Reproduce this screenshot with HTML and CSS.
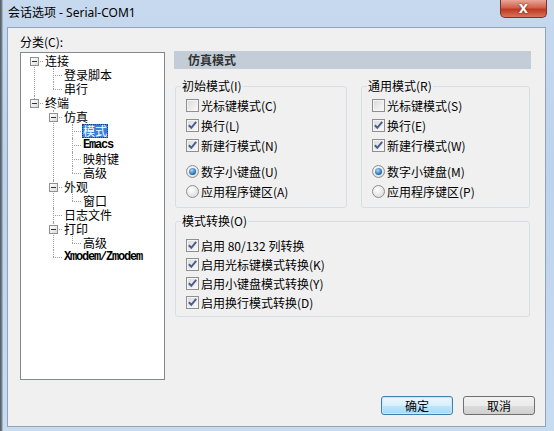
FILE: index.html
```html
<!DOCTYPE html>
<html lang="zh-CN">
<head>
  <meta charset="UTF-8" />
  <title>会话选项 - Serial-COM1</title>
  <link rel="stylesheet" href="styles.css">
</head>
<body>

  <div class="window">
    <div class="titlebar">
      <span class="title">会话选项 - Serial-COM1</span>
      <button class="close-btn">X</button>
    </div>

    <div class="client">
      <div class="main">

        <!-- category tree -->
        <div class="side">
          <div class="side-label">分类(C):</div>
          <div class="tree">
            <ul class="root">
              <li><span class="toggle"></span><span class="label">连接</span>
                <ul>
                  <li><span class="label">登录脚本</span></li>
                  <li><span class="label">串行</span></li>
                </ul>
              </li>
              <li><span class="toggle"></span><span class="label">终端</span>
                <ul>
                  <li><span class="toggle"></span><span class="label">仿真</span>
                    <ul>
                      <li><span class="label selected">模式</span></li>
                      <li><span class="label mono">Emacs</span></li>
                      <li><span class="label">映射键</span></li>
                      <li><span class="label">高级</span></li>
                    </ul>
                  </li>
                  <li><span class="toggle"></span><span class="label">外观</span>
                    <ul>
                      <li><span class="label">窗口</span></li>
                    </ul>
                  </li>
                  <li><span class="label">日志文件</span></li>
                  <li><span class="toggle"></span><span class="label">打印</span>
                    <ul>
                      <li><span class="label">高级</span></li>
                    </ul>
                  </li>
                  <li><span class="label mono">Xmodem/Zmodem</span></li>
                </ul>
              </li>
            </ul>
          </div>
        </div>

        <!-- settings panel -->
        <div class="panel">
          <div class="panel-header">仿真模式</div>

          <div class="group-row">
            <fieldset class="group group-init">
              <legend>初始模式(I)</legend>
              <div class="opts">
                <div class="opt"><span class="cb"></span>光标键模式(C)</div>
                <div class="opt"><span class="cb"><svg viewBox="0 0 11 11"><path d="M1.8 5.2 L4.3 7.8 L9.2 1.8"/></svg></span>换行(L)</div>
                <div class="opt"><span class="cb"><svg viewBox="0 0 11 11"><path d="M1.8 5.2 L4.3 7.8 L9.2 1.8"/></svg></span>新建行模式(N)</div>
                <div class="radios">
                  <div class="opt"><span class="rb on"></span>数字小键盘(U)</div>
                  <div class="opt"><span class="rb"></span>应用程序键区(A)</div>
                </div>
              </div>
            </fieldset>

            <fieldset class="group group-common">
              <legend>通用模式(R)</legend>
              <div class="opts">
                <div class="opt"><span class="cb"></span>光标键模式(S)</div>
                <div class="opt"><span class="cb"><svg viewBox="0 0 11 11"><path d="M1.8 5.2 L4.3 7.8 L9.2 1.8"/></svg></span>换行(E)</div>
                <div class="opt"><span class="cb"><svg viewBox="0 0 11 11"><path d="M1.8 5.2 L4.3 7.8 L9.2 1.8"/></svg></span>新建行模式(W)</div>
                <div class="radios">
                  <div class="opt"><span class="rb on"></span>数字小键盘(M)</div>
                  <div class="opt"><span class="rb"></span>应用程序键区(P)</div>
                </div>
              </div>
            </fieldset>
          </div>

          <fieldset class="group group-switch">
            <legend>模式转换(O)</legend>
            <div class="opts">
              <div class="opt"><span class="cb"><svg viewBox="0 0 11 11"><path d="M1.8 5.2 L4.3 7.8 L9.2 1.8"/></svg></span>启用 80/132 列转换</div>
              <div class="opt"><span class="cb"><svg viewBox="0 0 11 11"><path d="M1.8 5.2 L4.3 7.8 L9.2 1.8"/></svg></span>启用光标键模式转换(K)</div>
              <div class="opt"><span class="cb"><svg viewBox="0 0 11 11"><path d="M1.8 5.2 L4.3 7.8 L9.2 1.8"/></svg></span>启用小键盘模式转换(Y)</div>
              <div class="opt"><span class="cb"><svg viewBox="0 0 11 11"><path d="M1.8 5.2 L4.3 7.8 L9.2 1.8"/></svg></span>启用换行模式转换(D)</div>
            </div>
          </fieldset>
        </div>
      </div>

      <div class="footer">
        <button class="btn btn-default">确定</button>
        <button class="btn">取消</button>
      </div>
    </div>
  </div>

</body>
</html>
```

FILE: styles.css
```css
* {
  box-sizing: border-box;
}

body {
  margin: 0;
  font-family: "Noto Sans CJK SC", "Noto Sans", sans-serif;
  font-size: 12px;
  color: #000;
}

.window {
  width: 554px;
  height: 431px;
  display: flex;
  flex-direction: column;
  background:
    linear-gradient(to right, #4f5660 0, #7d8896 2px, transparent 3px),
    linear-gradient(to bottom, #c6d9ee, #bdd3eb 40%, #c8dcf1);
}

.titlebar {
  height: 27px;
  display: flex;
  justify-content: space-between;
  align-items: flex-start;
  padding-left: 8px;
}

.title {
  line-height: 26px;
  font-family: "Noto Sans", "Noto Sans CJK SC", sans-serif;
  font-size: 12px;
}

.close-btn {
  width: 47px;
  height: 18px;
  margin-right: 7px;
  padding: 0;
  border: 1px solid #7a3328;
  border-top: none;
  border-radius: 0 0 5px 5px;
  background: linear-gradient(#e9a797, #d0614c 45%, #bf3a22 55%, #d8735c);
  color: #fff;
  font-family: "DejaVu Sans", sans-serif;
  font-weight: bold;
  font-size: 12px;
  line-height: 16px;
  text-shadow: 0 0 2px #5a1a10;
}

.client {
  flex: 1;
  margin: 0 8px 4px 7px;
  display: flex;
  flex-direction: column;
  background: #f0f0f0;
  border: 1px solid #8fa4bc;
}

.main {
  display: flex;
  padding: 8px 0 0 12px;
}

.side {
  width: 145px;
}

.side-label {
  height: 16px;
  line-height: 12px;
}

/* tree view */

.tree {
  height: 328px;
  padding-top: 1px;
  border: 1px solid #828790;
  background: #fff;
  line-height: 14px;
}

.tree ul {
  list-style: none;
  margin: 0;
  padding: 0 0 0 19px;
}

.tree ul.root {
  padding-left: 23px;
}

.tree li {
  position: relative;
}

.tree li::before {
  content: "";
  position: absolute;
  left: -10px;
  top: 7px;
  width: 9px;
  border-top: 1px dotted #a0a0a0;
}

.tree li::after {
  content: "";
  position: absolute;
  left: -10px;
  top: 0;
  bottom: 0;
  border-left: 1px dotted #a0a0a0;
}

.tree li:last-child::after {
  bottom: auto;
  height: 7px;
}

.tree .root > li:first-child::after {
  top: 7px;
}

.toggle {
  position: absolute;
  left: -14px;
  top: 3px;
  width: 9px;
  height: 9px;
  z-index: 1;
  border: 1px solid #919191;
  background: linear-gradient(135deg, #ffffff, #dcdcdc);
}

.toggle::after {
  content: "";
  position: absolute;
  left: 1px;
  top: 3px;
  width: 5px;
  height: 1px;
  background: #333;
}

.label {
  display: inline-block;
  vertical-align: top;
  height: 14px;
  line-height: 14px;
  padding: 0 1px;
  white-space: nowrap;
}

.label.mono {
  font-family: "Liberation Mono", monospace;
  font-weight: bold;
  font-size: 12px;
  letter-spacing: -1.2px;
}

.label.selected {
  background: #3b7fda;
  color: #fff;
  outline: 1px dotted #1d3f73;
  outline-offset: -1px;
}

/* right panel */

.panel {
  width: 357px;
  margin: 15px 0 0 9px;
}

.panel-header {
  height: 18px;
  line-height: 18px;
  padding-left: 14px;
  background: #c2cdd8;
  color: #333;
  font-weight: bold;
}

.group-row {
  display: flex;
  gap: 14px;
  margin-top: 10px;
  padding: 0 1px;
}

.group {
  margin: 0;
  padding: 0 0 6px 0;
  min-width: 0;
  border: 1px solid #d5dfe5;
  border-radius: 3px;
}

.group legend {
  margin-left: 5px;
  padding: 0 1px;
  line-height: 14px;
}

.group-init {
  width: 172px;
}

.group-common {
  flex: 1;
}

.opts {
  padding: 2px 0 0 10px;
}

.opt {
  display: flex;
  align-items: center;
  gap: 2px;
  height: 20px;
  white-space: nowrap;
}

.radios {
  margin-top: 6px;
}

.group-switch {
  margin: 6px 1px 0 1px;
  padding-bottom: 4px;
}

.group-switch .opts {
  padding-top: 8px;
}

.group-switch .opt {
  height: 19px;
}

.cb {
  width: 13px;
  height: 13px;
  flex: none;
  border: 1px solid #8f8f8f;
  background: linear-gradient(135deg, #d9d9d9, #fbfbfb);
  box-shadow: inset 0 0 0 1px #f4f4f4;
}

.cb svg {
  display: block;
  width: 11px;
  height: 11px;
  fill: none;
  stroke: #4a5f8e;
  stroke-width: 2;
}

.rb {
  width: 13px;
  height: 13px;
  flex: none;
  display: flex;
  align-items: center;
  justify-content: center;
  border: 1px solid #8f8f8f;
  border-radius: 50%;
  background: radial-gradient(circle at 40% 35%, #ffffff, #d4d4d4);
}

.rb.on::after {
  content: "";
  width: 7px;
  height: 7px;
  border-radius: 50%;
  background: radial-gradient(circle at 40% 35%, #a9dcf7, #2c74ba 60%, #174a84);
}

/* buttons */

.footer {
  display: flex;
  justify-content: flex-end;
  gap: 10px;
  margin-top: 16px;
  padding: 0 10px 11px 0;
}

.btn {
  width: 72px;
  height: 19px;
  padding: 0;
  border: 1px solid #707070;
  border-radius: 3px;
  background: linear-gradient(#f2f2f2 0, #ebebeb 50%, #dddddd 50%, #cfcfcf);
  font-family: inherit;
  font-size: 12px;
  line-height: 17px;
  color: #000;
}

.btn-default {
  border-color: #3c7fb1;
  background: linear-gradient(#eaf6fd 0, #d9f0fc 50%, #bee6fd 50%, #a7d9f5);
  box-shadow: inset 0 0 0 1px #c8e8fa;
}
```
